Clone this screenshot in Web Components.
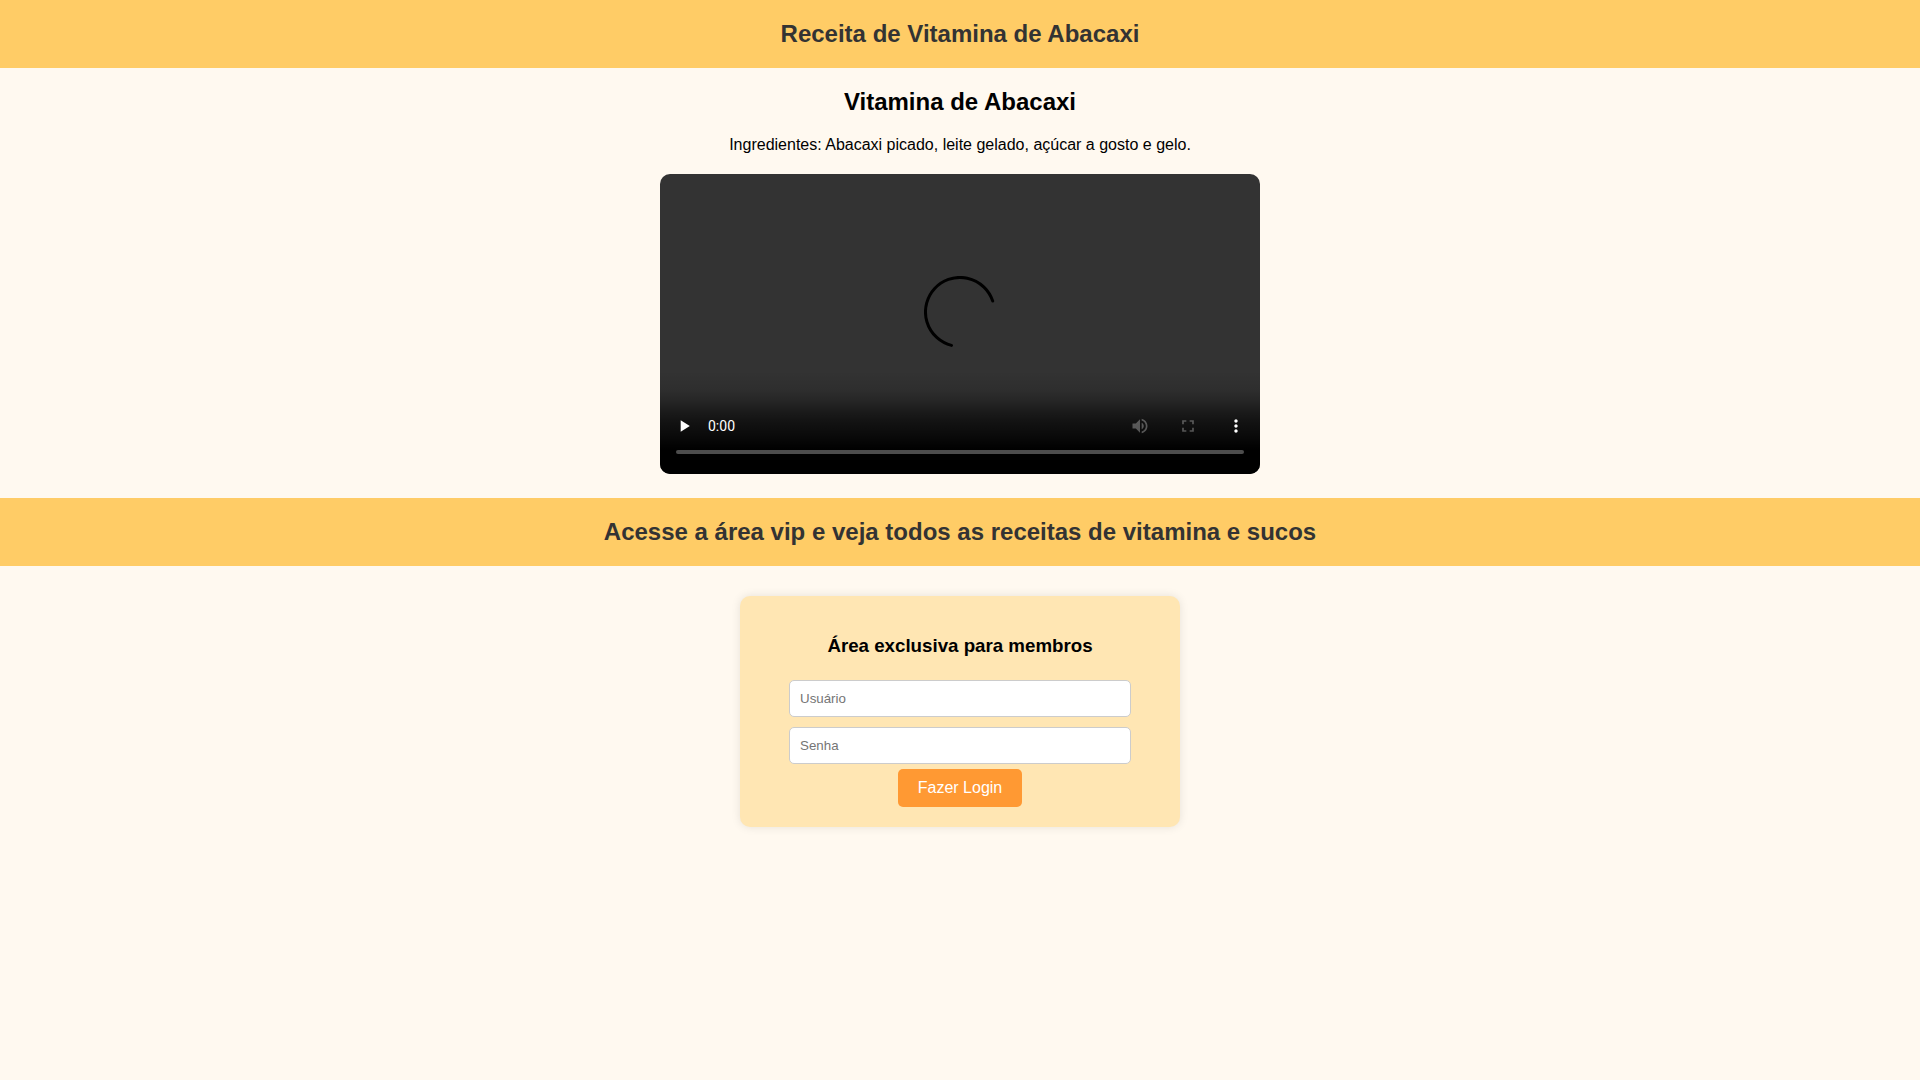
<!DOCTYPE html>
<html lang="pt-BR">
<head>
  <meta charset="UTF-8">
  <meta name="viewport" content="width=device-width, initial-scale=1.0">
  <title>Receita de Vitamina de Abacaxi</title>
  <style>
    body {
      margin: 0;
      font-family: Arial, "Liberation Sans", sans-serif;
      background-color: #fff9f0;
      text-align: center;
    }
  </style>
</head>
<body>
  <page-banner>Receita de Vitamina de Abacaxi</page-banner>
  <main>
    <recipe-section heading="Vitamina de Abacaxi">
      <span slot="ingredients">Ingredientes: Abacaxi picado, leite gelado, açúcar a gosto e gelo.</span>
      <recipe-player time="0:00"></recipe-player>
    </recipe-section>
    <page-banner>Acesse a área vip e veja todos as receitas de vitamina e sucos</page-banner>
    <login-card heading="Área exclusiva para membros"></login-card>
  </main>

  <script>
    class PageBanner extends HTMLElement {
      constructor() {
        super();
        this.attachShadow({ mode: "open" });
        this.shadowRoot.innerHTML = `
          <style>
            :host {
              display: block;
              padding: 20px;
              background-color: #ffcc66;
              color: #333;
            }

            h1 {
              margin: 0;
              font-size: 24px;
              line-height: 28px;
            }
          </style>
          <h1><slot></slot></h1>
        `;
      }
    }

    class RecipeSection extends HTMLElement {
      constructor() {
        super();
        this.attachShadow({ mode: "open" });
        this.shadowRoot.innerHTML = `
          <style>
            :host {
              display: flex;
              flex-direction: column;
              align-items: center;
              gap: 20px;
              padding: 20px 20px 24px;
            }

            h2 {
              margin: 0;
              font-size: 24px;
              line-height: 28px;
            }

            p {
              margin: 0;
              font-size: 16px;
              line-height: 18px;
            }
          </style>
          <h2></h2>
          <p><slot name="ingredients"></slot></p>
          <slot></slot>
        `;
      }

      connectedCallback() {
        this.shadowRoot.querySelector("h2").textContent = this.getAttribute("heading");
      }
    }

    class RecipePlayer extends HTMLElement {
      constructor() {
        super();
        this.attachShadow({ mode: "open" });
        this.shadowRoot.innerHTML = `
          <style>
            :host {
              display: grid;
              width: 100%;
              max-width: 600px;
              aspect-ratio: 2 / 1;
              border-radius: 10px;
              overflow: hidden;
              background-color: #333;
              color: white;
            }

            .spinner {
              grid-area: 1 / 1;
              place-self: center;
              width: 72px;
              height: 72px;
              margin-bottom: 24px;
            }

            .panel {
              grid-area: 1 / 1;
              align-self: end;
              box-sizing: border-box;
              padding: 40px 0 20px;
              background: linear-gradient(transparent 8%, rgba(0, 0, 0, 0.1) 25%, rgba(0, 0, 0, 0.25) 34%, rgba(0, 0, 0, 0.45) 43%, rgba(0, 0, 0, 0.62) 52%, rgba(0, 0, 0, 0.87) 70%, black 79%);
            }

            .row {
              display: flex;
              align-items: center;
            }

            .time {
              flex: 1;
              text-align: left;
              font-family: Roboto, sans-serif;
              font-size: 14px;
              line-height: 16px;
            }

            button {
              display: grid;
              place-items: center;
              width: 48px;
              height: 48px;
              padding: 0;
              border: 0;
              background: none;
              color: inherit;
              cursor: pointer;
            }

            button svg {
              width: 20px;
              height: 20px;
              fill: currentColor;
            }

            button:disabled {
              opacity: 0.3;
              cursor: default;
            }

            input {
              display: block;
              appearance: none;
              width: calc(100% - 32px);
              height: 4px;
              margin: 0 16px;
              border-radius: 2px;
              background-color: rgba(255, 255, 255, 0.3);
            }

            input::-webkit-slider-thumb {
              appearance: none;
              width: 0;
              height: 0;
            }
          </style>
          <svg class="spinner" viewBox="0 0 72 72" aria-hidden="true">
            <path d="M68.7 25A34.5 34.5 0 1 0 27.5 69.4" fill="none" stroke="black" stroke-width="3" stroke-linecap="round"/>
          </svg>
          <div class="panel">
            <div class="row">
              <button type="button" aria-label="Reproduzir">
                <svg viewBox="0 0 24 24"><path d="M8 5v14l11-7z"/></svg>
              </button>
              <span class="time"></span>
              <button type="button" aria-label="Volume" disabled>
                <svg viewBox="0 0 24 24"><path d="M3 9v6h4l5 5V4L7 9H3zm13.500 3c0-1.770-1.020-3.290-2.500-4.030v8.050c1.480-.73 2.500-2.250 2.500-4.020zM14 3.230v2.060c2.890.86 5 3.540 5 6.710s-2.110 5.850-5 6.710v2.060c4.010-.91 7-4.490 7-8.770s-2.990-7.860-7-8.770z"/></svg>
              </button>
              <button type="button" aria-label="Tela cheia" disabled>
                <svg viewBox="0 0 24 24"><path d="M7 14H5v5h5v-2H7v-3zm-2-4h2V7h3V5H5v5zm12 7h-3v2h5v-5h-2v3zM14 5v2h3v3h2V5h-5z"/></svg>
              </button>
              <button type="button" aria-label="Mais opções">
                <svg viewBox="0 0 24 24"><path d="M12 8c1.100 0 2-.9 2-2s-.9-2-2-2-2 .9-2 2 .9 2 2 2zm0 2c-1.100 0-2 .9-2 2s.9 2 2 2 2-.9 2-2-.9-2-2-2zm0 6c-1.100 0-2 .9-2 2s.9 2 2 2 2-.9 2-2-.9-2-2-2z"/></svg>
              </button>
            </div>
            <input type="range" min="0" max="100" value="0" aria-label="Progresso do vídeo">
          </div>
        `;
      }

      connectedCallback() {
        this.shadowRoot.querySelector(".time").textContent = this.getAttribute("time");
      }
    }

    class LoginCard extends HTMLElement {
      constructor() {
        super();
        this.attachShadow({ mode: "open" });
        this.shadowRoot.innerHTML = `
          <style>
            :host {
              display: block;
              box-sizing: border-box;
              max-width: 440px;
              margin: 30px auto;
              padding: 20px;
              border-radius: 10px;
              background-color: #ffe6b3;
              box-shadow: 0 0 10px rgba(0, 0, 0, 0.1);
            }

            h3 {
              margin: 20px 0 24px;
              line-height: 20px;
            }

            form {
              display: flex;
              flex-direction: column;
              align-items: center;
            }

            input {
              box-sizing: border-box;
              width: 100%;
              max-width: 342px;
              height: 37px;
              margin-bottom: 10px;
              padding: 10px;
              border: 1px solid #ccc;
              border-radius: 5px;
              font-family: inherit;
            }

            input[type="password"] {
              margin-bottom: 5px;
            }

            button {
              padding: 10px 20px;
              border: none;
              border-radius: 5px;
              background-color: #ff9933;
              color: white;
              font-family: inherit;
              font-size: 16px;
              line-height: 18px;
              cursor: pointer;
            }
          </style>
          <h3></h3>
          <form>
            <input type="text" placeholder="Usuário" aria-label="Usuário">
            <input type="password" placeholder="Senha" aria-label="Senha">
            <button type="submit">Fazer Login</button>
          </form>
        `;
      }

      connectedCallback() {
        this.shadowRoot.querySelector("h3").textContent = this.getAttribute("heading");
        this.shadowRoot.querySelector("form").addEventListener("submit", (event) => event.preventDefault());
      }
    }

    customElements.define("page-banner", PageBanner);
    customElements.define("recipe-section", RecipeSection);
    customElements.define("recipe-player", RecipePlayer);
    customElements.define("login-card", LoginCard);
  </script>
</body>
</html>
